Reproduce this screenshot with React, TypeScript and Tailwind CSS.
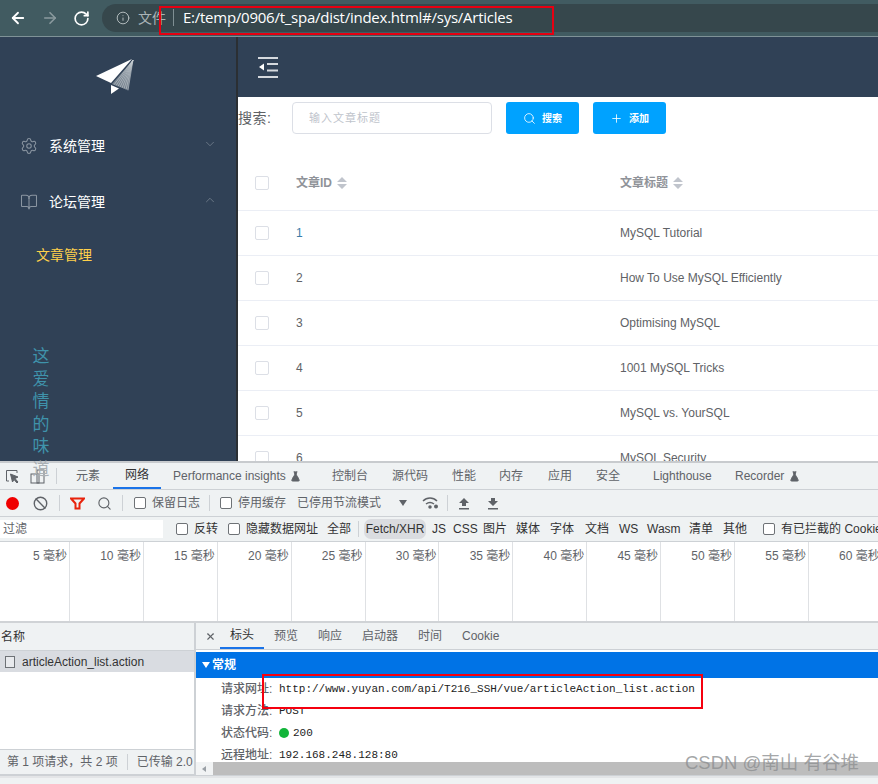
import { ArrowLeft, ArrowRight, RotateCw, Info, Settings, BookOpen, ChevronDown, ChevronUp, Search, Plus, Ban, FlaskConical, X } from 'lucide-react'

const rows = [
    { id: '1', title: 'MySQL Tutorial' },
    { id: '2', title: 'How To Use MySQL Efficiently' },
    { id: '3', title: 'Optimising MySQL' },
    { id: '4', title: '1001 MySQL Tricks' },
    { id: '5', title: 'MySQL vs. YourSQL' },
    { id: '6', title: 'MySQL Security' },
]

const ticks = ['5', '10', '15', '20', '25', '30', '35', '40', '45', '50', '55', '60']
const types = [
    { label: 'JS', w: 'w-[21px]' },
    { label: 'CSS', w: 'w-[30px]' },
    { label: '图片', w: 'w-[33px]' },
    { label: '媒体', w: 'w-[34px]' },
    { label: '字体', w: 'w-[35px]' },
    { label: '文档', w: 'w-[34px]' },
    { label: 'WS', w: 'w-[28px]' },
    { label: 'Wasm', w: 'w-[42px]' },
    { label: '清单', w: 'w-[34px]' },
    { label: '其他', w: 'w-[40px]' },
]
const general = [
    { label: '请求方法:', value: 'POST' },
    { label: '状态代码:', value: '200', dot: true },
    { label: '远程地址:', value: '192.168.248.128:80' },
]
const planeLines = [18, 20, 22, 24, 26, 28, 30, 32]

function SortCaret() {
    return (
        <svg width="10" height="12" viewBox="0 0 10 12" className="ml-[5px]">
            <path d="M5 0 L10 5 H0 Z M0 7 H10 L5 12 Z" fill="#c0c4cc" />
        </svg>
    )
}

function Box() {
    return <span className="block w-[14px] h-[14px] shrink-0 rounded-[2px] border border-[#dcdfe6] bg-white" />
}

function DevCheck({ label, className }: { label: string; className?: string }) {
    return (
        <span className={`flex items-center gap-[6px] shrink-0 whitespace-nowrap ${className ?? ''}`}>
            <span className="block w-[12px] h-[12px] rounded-[2px] border border-[#6e7276] bg-white" />
            {label}
        </span>
    )
}

function PaperPlane() {
    return (
        <svg width="38" height="36" viewBox="0 0 38 36">
            <path d="M0 17 L36 0 L15 24 Z" fill="#ffffff" />
            <path d="M16 25 L37 1 L32 31 Z" fill="#77838f" />
            {planeLines.map((x) => (
                <path key={x} d={`M37 1 L${x} ${25 + (x - 16) * 0.4}`} stroke="#c6ccd2" strokeWidth="0.600" />
            ))}
            <path d="M15 26 L23 29.500 L15 35 Z" fill="#ffffff" />
        </svg>
    )
}

function Outdent() {
    return (
        <svg width="20" height="21" viewBox="0 0 20 21" fill="#d5d9de">
            <rect x="0" y="0" width="20" height="2" />
            <rect x="9" y="6" width="11" height="2" />
            <rect x="9" y="12.500" width="11" height="2" />
            <rect x="0" y="19" width="20" height="2" />
            <path d="M6 6.500 V13.500 L1 10 Z" fill="#ffffff" />
        </svg>
    )
}

function Sidebar() {
    return (
        <aside className="relative z-10 w-[238px] shrink-0 bg-[#304156] border-r-2 border-[#2b2f33]">
            <div className="flex justify-center pt-[22px] pr-[6px] h-[81px]">
                <PaperPlane />
            </div>
            <div className="flex items-center h-[56px] pl-[20px] pr-[19px] text-white text-[14px]">
                <Settings size={18} strokeWidth={1.400} className="text-[#8a95a1]" />
                <span className="ml-[11px]">系统管理</span>
                <ChevronDown size={14} strokeWidth={1.200} className="ml-auto -mt-[4px] text-[#7f8b98]" />
            </div>
            <div className="flex items-center h-[56px] pl-[20px] pr-[19px] text-white text-[14px]">
                <BookOpen size={18} strokeWidth={1.400} className="text-[#8a95a1]" />
                <span className="ml-[11px]">论坛管理</span>
                <ChevronUp size={14} strokeWidth={1.200} className="ml-auto -mt-[4px] text-[#7f8b98]" />
            </div>
            <div className="h-[50px] pl-[36px] flex items-center text-[14px] text-[#ffd04b]">文章管理</div>
            {/* runs past the panel into devtools, like the page's floating text */}
            <div className="absolute left-[31px] top-[307px] w-[20px] text-[17px] leading-[22.500px] text-center text-[#3f93ab] font-['Noto_Sans_CJK_SC',sans-serif]">
                <div>这</div>
                <div>爱</div>
                <div>情</div>
                <div>的</div>
                <div>味</div>
                <div className="text-[#aab0b4]">道</div>
            </div>
        </aside>
    )
}

function ArticleTable() {
    return (
        <div>
            <div className="flex items-center h-[77px] pt-[22px] border-b border-[#ebeef5] text-[12px] font-bold text-[#909399]">
                <span className="pl-[17px] w-[58px]"><Box /></span>
                <span className="w-[324px] flex items-center">文章ID<SortCaret /></span>
                <span className="flex items-center">文章标题<SortCaret /></span>
            </div>
            {rows.map((row) => (
                <div key={row.id} className="flex items-center h-[45px] shrink-0 border-b border-[#ebeef5] text-[12px] text-[#606266]">
                    <span className="pl-[17px] w-[58px]"><Box /></span>
                    <span className={`w-[324px] ${row.id === '1' ? 'text-[#3a7ca8]' : ''}`}>{row.id}</span>
                    <span>{row.title}</span>
                </div>
            ))}
        </div>
    )
}

function AppPage() {
    return (
        <div className="flex h-[424px] shrink-0 overflow-visible">
            <Sidebar />
            <main className="flex-1 min-w-0 overflow-hidden bg-white">
                <div className="h-[60px] bg-[#304156] flex items-center pl-[20px]">
                    <Outdent />
                </div>
                <div className="flex items-center mt-[5px] h-[32px] text-[14px] text-[#606266]">
                    <span className="w-[54px] tracking-[0.500px]">搜索:</span>
                    <div className="w-[200px] h-[32px] flex items-center pl-[16px] rounded-[4px] border border-[#dcdfe6] text-[11px] tracking-[1px] text-[#c0c4cc]">输入文章标题</div>
                    <div className="ml-[14px] w-[73px] h-[32px] flex items-center justify-center gap-[6px] rounded-[3px] bg-[#00a2ff] text-white text-[10px] font-bold">
                        <Search size={13} strokeWidth={1.500} />搜索
                    </div>
                    <div className="ml-[14px] w-[73px] h-[32px] flex items-center justify-center gap-[6px] rounded-[3px] bg-[#00a2ff] text-white text-[10px] font-bold">
                        <Plus size={13} strokeWidth={1.500} />添加
                    </div>
                </div>
                <ArticleTable />
            </main>
        </div>
    )
}

function DevToolsTabs() {
    return (
        <div className="flex items-stretch h-[27px] border-b border-[#cdd1d5] text-[12px] text-[#5f6368] whitespace-nowrap">
            <div className="flex items-center pl-[5px] w-[60px] gap-[10px] text-[#5f6368]">
                <svg width="15" height="15" viewBox="0 0 15 15" fill="none" stroke="#5f6368">
                    <path d="M12 4 V1.500 H1.500 V12 H4" />
                    <path d="M5.500 5 L13 8 L10 9.500 L13 13 L12 14 L9 10.500 L7.500 13 Z" fill="#5f6368" />
                </svg>
                <svg width="16" height="15" viewBox="0 0 16 15" fill="none" stroke="#5f6368">
                    <rect x="1" y="5" width="8" height="9" />
                    <rect x="7" y="1" width="7" height="13" />
                </svg>
                <span className="w-px h-[16px] bg-[#cdd1d5]" />
            </div>
            <span className="flex items-center pl-[17px] w-[54px] shrink-0 -ml-[1px]">元素</span>
            <span className="flex items-center justify-center w-[48px] shrink-0 border-b-2 border-[#1a73e8] text-[#333]">网络</span>
            <span className="flex items-center pl-[12px] w-[171px] shrink-0">Performance insights<FlaskConical size={11} fill="#5f6368" className="ml-[4px]" /></span>
            <span className="flex items-center w-[60px] shrink-0">控制台</span>
            <span className="flex items-center w-[60px] shrink-0">源代码</span>
            <span className="flex items-center w-[47px] shrink-0">性能</span>
            <span className="flex items-center w-[49px] shrink-0">内存</span>
            <span className="flex items-center w-[48px] shrink-0">应用</span>
            <span className="flex items-center w-[57px] shrink-0">安全</span>
            <span className="flex items-center w-[82px] shrink-0">Lighthouse</span>
            <span className="flex items-center">Recorder<FlaskConical size={11} fill="#5f6368" className="ml-[5px]" /></span>
        </div>
    )
}

function NetworkToolbar() {
    return (
        <div className="flex items-center h-[27px] border-b border-[#cdd1d5] text-[12px] text-[#5f6368] whitespace-nowrap">
            <span className="ml-[6px] w-[13px] h-[13px] rounded-full bg-[#f00000]" />
            <Ban size={15} strokeWidth={2.200} className="ml-[14px]" />
            <span className="ml-[11px] w-px h-[16px] bg-[#cdd1d5]" />
            <svg width="15" height="13" viewBox="0 0 15 13" className="ml-[10px]" fill="none" stroke="#e8230c" strokeWidth="2">
                <path d="M1 1.500 H14 L9.500 6.500 V11.500 H5.500 V6.500 Z" />
            </svg>
            <Search size={15} strokeWidth={1.800} className="ml-[12px]" />
            <span className="ml-[10px] w-px h-[16px] bg-[#cdd1d5]" />
            <DevCheck label="保留日志" className="ml-[11px]" />
            <span className="ml-[9px] w-px h-[16px] bg-[#cdd1d5]" />
            <DevCheck label="停用缓存" className="ml-[10px]" />
            <span className="ml-[11px]">已停用节流模式</span>
            <svg width="8" height="6" viewBox="0 0 8 6" className="ml-[18px]"><path d="M0 0 H8 L4 6 Z" fill="#5f6368" /></svg>
            <svg width="18" height="14" viewBox="0 0 18 14" fill="none" stroke="#5f6368" strokeWidth="1.500" className="ml-[15px]">
                <path d="M1 5 C5 1 11 1 15 5 M4 8 C6.500 6 9.500 6 12 8" />
                <circle cx="8" cy="11" r="1" fill="#5f6368" />
                <circle cx="14" cy="10.500" r="2" fill="#5f6368" stroke="none" />
            </svg>
            <span className="ml-[7px] w-px h-[16px] bg-[#cdd1d5]" />
            <svg width="12" height="13" viewBox="0 0 12 13" fill="#5f6368" className="ml-[10px]"><path d="M6 1 L11 6 H8 V9 H4 V6 H1 Z M1 11 H11 V12.500 H1 Z" /></svg>
            <svg width="12" height="13" viewBox="0 0 12 13" fill="#5f6368" className="ml-[17px]"><path d="M4 1 H8 V4 H11 L6 9 L1 4 H4 Z M1 11 H11 V12.500 H1 Z" /></svg>
        </div>
    )
}

function FilterBar() {
    return (
        <div className="flex items-center h-[25px] border-b border-[#cdd1d5] text-[12px] text-[#333] whitespace-nowrap overflow-hidden">
            <span className="w-[163px] h-[18px] pl-[3px] bg-white flex items-center text-[#5f6368] shrink-0">过滤</span>
            <DevCheck label="反转" className="ml-[13px]" />
            <DevCheck label="隐藏数据网址" className="ml-[10px]" />
            <span className="ml-[9px] shrink-0">全部</span>
            <span className="ml-[7px] w-px h-[16px] bg-[#cdd1d5] shrink-0" />
            <span className="ml-[5px] w-[62px] h-[20px] rounded-[7px] bg-[#dadce0] flex items-center justify-center shrink-0">Fetch/XHR</span>
            <span className="w-[6px] shrink-0" />
            {types.map((t) => (
                <span key={t.label} className={`${t.w} shrink-0`}>{t.label}</span>
            ))}
            <DevCheck label="有已拦截的 Cookie" />
        </div>
    )
}

function Timeline() {
    return (
        <div className="flex h-[81px] bg-white border-b-2 border-[#d0d3d6] text-[12px] text-[#5f6368] overflow-hidden">
            {ticks.map((t, i) => (
                <div key={t} className={`${i === 0 ? 'w-[70px]' : 'w-[73.900px]'} shrink-0 pr-[2px] pt-[5px] text-right border-r border-[#dfe1e4] whitespace-nowrap`}>
                    {t} 毫秒
                </div>
            ))}
        </div>
    )
}

function RequestList() {
    return (
        <div className="w-[196px] shrink-0 flex flex-col border-r-2 border-[#cdd1d5] text-[12px] text-[#333]">
            <div className="h-[28px] flex items-center pl-[1px] border-b border-[#cdd1d5]">名称</div>
            <div className="h-[21px] flex items-center bg-[#d9dce1] pl-[5px]">
                <span className="block w-[10px] h-[12px] border border-[#6e7276] bg-white/40 mr-[7px]" />
                articleAction_list.action
            </div>
            <div className="flex-1 bg-white" />
            <div className="h-[27px] flex items-center pl-[7px] border-t border-[#cdd1d5] border-b-2 whitespace-nowrap overflow-hidden text-[#5f6368]">
                第 1 项请求，共 2 项
                <span className="mx-[9px] w-px h-[16px] bg-[#cdd1d5] shrink-0" />
                已传输 2.0
            </div>
        </div>
    )
}

function HeadersPane() {
    return (
        <div className="flex-1 min-w-0 flex flex-col text-[12px]">
            <div className="h-[27px] flex items-stretch border-b border-[#cdd1d5] text-[#5f6368]">
                <X size={11} strokeWidth={2.500} className="ml-[8px] mt-[8px] w-[13px]" />
                <span className="ml-[3px] w-[44px] flex items-center justify-center border-b-2 border-[#1a73e8] text-[#333]">标头</span>
                <span className="ml-[10px] w-[44px] flex items-center">预览</span>
                <span className="w-[44px] flex items-center">响应</span>
                <span className="w-[56px] flex items-center">启动器</span>
                <span className="w-[44px] flex items-center">时间</span>
                <span className="flex items-center">Cookie</span>
            </div>
            <div className="flex-1 bg-white overflow-hidden">
                <div className="mt-[2px] h-[26px] flex items-center pl-[6px] bg-[#0073e6] text-white font-bold">
                    <svg width="8" height="6" viewBox="0 0 8 6" className="mr-[2px]"><path d="M0 0 H8 L4 6 Z" fill="#ffffff" /></svg>
                    常规
                </div>
                <div className="flex items-center h-[22px] pl-[25px] text-[#5f6368] font-medium">
                    <span className="w-[58px]">请求网址:</span>
                    <span className="font-['Liberation_Mono',monospace] font-normal text-[#222] whitespace-nowrap text-[11px]">http://www.yuyan.com/api/T216_SSH/vue/articleAction_list.action</span>
                </div>
                {general.map((g) => (
                    <div key={g.label} className="flex items-center h-[22px] pl-[25px] text-[#5f6368] font-medium">
                        <span className="w-[58px]">{g.label}</span>
                        {g.dot && <span className="w-[10px] h-[10px] rounded-full bg-[#12b53a] mr-[4px]" />}
                        <span className="font-['Liberation_Mono',monospace] font-normal text-[#222] text-[11px]">{g.value}</span>
                    </div>
                ))}
            </div>
            <div className="h-[14px] flex items-stretch bg-[#f1f3f4] border-b border-[#cdd1d5] shrink-0">
                <svg width="17" height="14" viewBox="0 0 17 14"><path d="M10 4 V10 L6 7 Z" fill="#9aa0a6" /></svg>
                <span className="flex-1 bg-[#bdbdbd]" />
            </div>
        </div>
    )
}

function DevTools() {
    return (
        <section className="flex-1 min-h-0 flex flex-col bg-[#eff2f3] border-t-2 border-[#c8cbce]">
            <DevToolsTabs />
            <NetworkToolbar />
            <FilterBar />
            <Timeline />
            <div className="flex h-[155px] border-b-2 border-[#e3e5e7]">
                <RequestList />
                <HeadersPane />
            </div>
        </section>
    )
}

export default function App() {
    return (
        <div className="relative w-[878px] h-[784px] overflow-hidden flex flex-col bg-white font-['Liberation_Sans','Noto_Sans_CJK_SC',sans-serif]">
            <header className="h-[37px] shrink-0 flex items-center bg-[#415b61] border-b border-[#7f9297] text-white">
                <ArrowLeft size={18} strokeWidth={2.400} className="ml-[9px]" />
                <ArrowRight size={18} strokeWidth={2.200} className="ml-[14px] text-[#8a9a9e]" />
                <RotateCw size={17} strokeWidth={2.400} className="ml-[14px]" />
                <div className="ml-[12px] flex items-center flex-1 h-[28px] -mt-[1px] rounded-l-full bg-[#36474c]">
                    <Info size={14} strokeWidth={1.500} className="ml-[14px] text-[#c2cacc]" />
                    <span className="ml-[8px] text-[14px] text-[#aab4b7] font-['Noto_Sans_CJK_SC',sans-serif]">文件</span>
                    <span className="ml-[7px] w-px h-[17px] bg-[#7f8f93]" />
                    <span className="ml-[9px] text-[15px] text-white font-['Open_Sans',sans-serif] tracking-[-0.250px]">E:/temp/0906/t_spa/dist/index.html#/sys/Articles</span>
                </div>
            </header>
            <AppPage />
            <DevTools />

            {/* annotations drawn on top of the screenshot */}
            <div className="absolute left-[159px] top-[6px] w-[395px] h-[29px] border-2 border-[#e60012]" />
            <div className="absolute left-[262px] top-[674px] w-[441px] h-[35px] border-2 border-[#f5000f]" />
            <div className="absolute left-[685px] top-[750px] text-[18.500px] leading-[26px] text-[#8d8f91]/80 whitespace-nowrap">CSDN @南山 有谷堆</div>
        </div>
    )
}
